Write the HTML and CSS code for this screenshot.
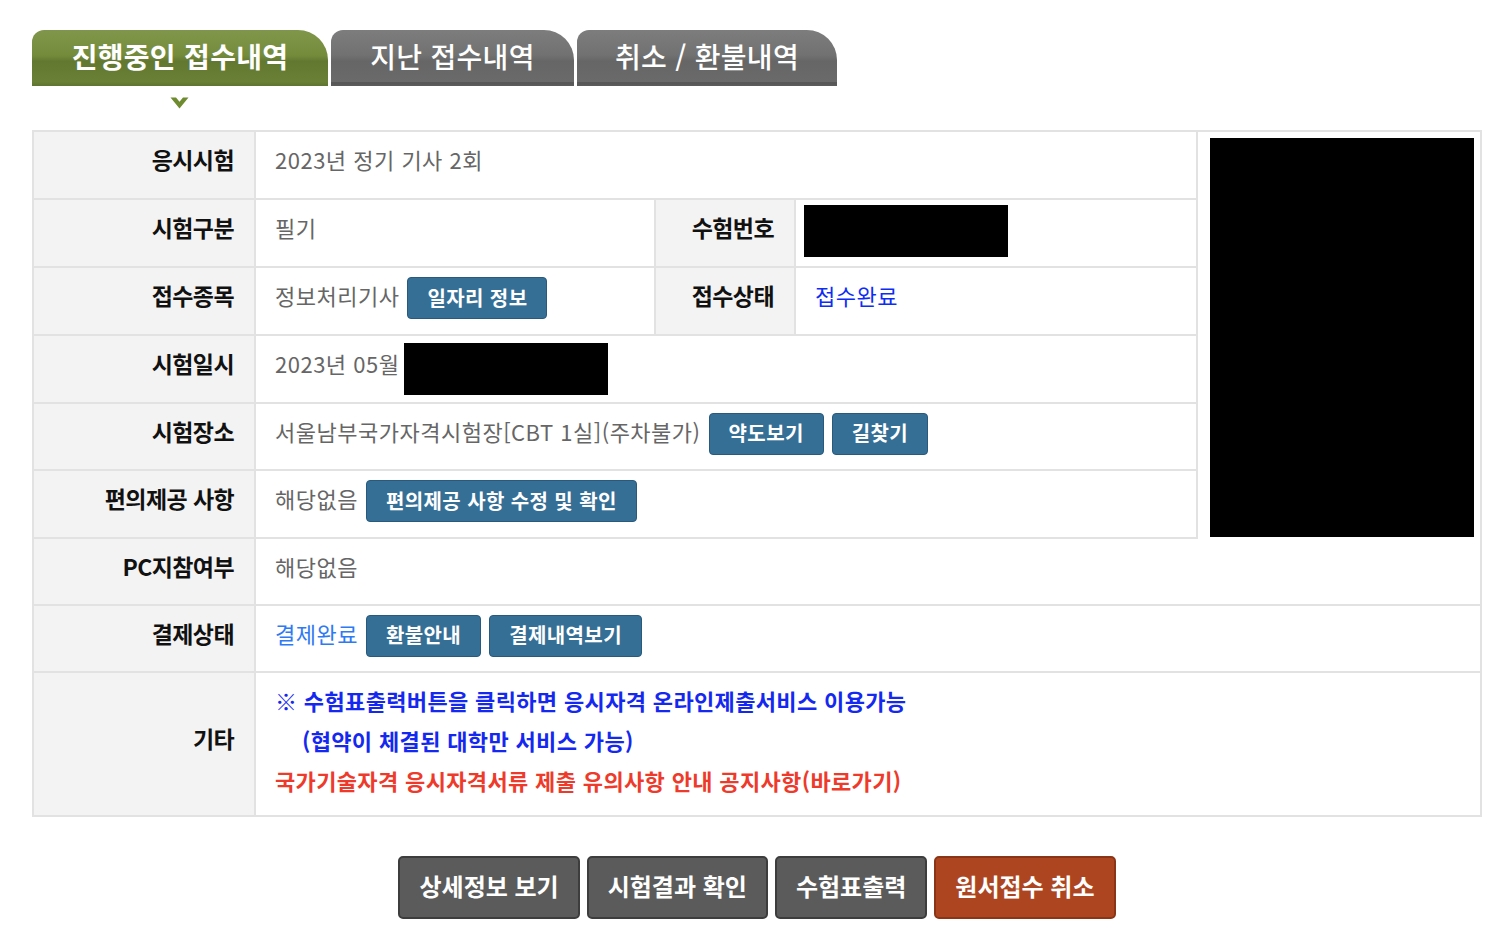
FILE: index.html
```html
<!DOCTYPE html>
<html lang="ko">
<head>
<meta charset="utf-8">
<title>접수내역</title>
<link rel="stylesheet" href="styles.css">
</head>
<body>
<div class="page">
  <div class="tabs">
    <div class="tab tab-active">진행중인 접수내역</div>
    <div class="tab tab-gray tab-w1">지난 접수내역</div>
    <div class="tab tab-gray tab-w2">취소 / 환불내역</div>
  </div>
  <div class="chev">
    <svg width="19" height="12" viewBox="0 0 19 12"><path d="M0.5 0.5 H6 L9.5 4.8 L13 0.5 H18.5 L9.5 11.5 Z" fill="#6f8b2f"/></svg>
  </div>

  <div class="info">
    <div class="lbl">응시시험</div>
    <div class="val span3">2023년 정기 기사 2회</div>
    <div class="photo"><div class="photo-box"></div></div>

    <div class="lbl">시험구분</div>
    <div class="val">필기</div>
    <div class="lbl">수험번호</div>
    <div class="val val-tight"><div class="redact"></div></div>

    <div class="lbl">접수종목</div>
    <div class="val">정보처리기사<span class="btn">일자리 정보</span></div>
    <div class="lbl">접수상태</div>
    <div class="val"><span class="link">접수완료</span></div>

    <div class="lbl">시험일시</div>
    <div class="val span3">2023년 05월<div class="redact redact-date"></div></div>

    <div class="lbl">시험장소</div>
    <div class="val span3">서울남부국가자격시험장[CBT 1실](주차불가)<span class="btn">약도보기</span><span class="btn">길찾기</span></div>

    <div class="lbl">편의제공 사항</div>
    <div class="val span3">해당없음<span class="btn">편의제공 사항 수정 및 확인</span></div>

    <div class="lbl">PC지참여부</div>
    <div class="val spanall">해당없음</div>

    <div class="lbl">결제상태</div>
    <div class="val spanall"><span class="link link-light">결제완료</span><span class="btn">환불안내</span><span class="btn">결제내역보기</span></div>

    <div class="lbl">기타</div>
    <div class="val spanall etc">
      <div class="etc-blue">※ 수험표출력버튼을 클릭하면 응시자격 온라인제출서비스 이용가능</div>
      <div class="etc-blue etc-indent">(협약이 체결된 대학만 서비스 가능)</div>
      <div class="etc-red">국가기술자격 응시자격서류 제출 유의사항 안내 공지사항(바로가기)</div>
    </div>
  </div>

  <div class="actions">
    <span class="act">상세정보 보기</span>
    <span class="act">시험결과 확인</span>
    <span class="act">수험표출력</span>
    <span class="act act-red">원서접수 취소</span>
  </div>
</div>
</body>
</html>
```
FILE: styles.css
```css
* { box-sizing: border-box; }
html, body { margin: 0; padding: 0; background: #fff; }
body {
  font-family: "Noto Sans CJK KR", "Noto Sans", sans-serif;
  color: #111;
}
.page {
  margin-left: 32px;
  padding-top: 30px;
  width: 1450px;
}
.tabs {
  display: flex;
  gap: 3px;
  height: 56px;
}
.tab {
  height: 56px;
  border-radius: 12px 30px 0 0;
  display: flex;
  align-items: center;
  justify-content: center;
  color: #fff;
  font-size: 28px;
  letter-spacing: 0.3px;
  padding-bottom: 5px;
}
.tab-active {
  width: 296px;
  font-weight: 700;
  background: linear-gradient(#80964a 0%, #758b3c 45%, #627830 56%, #6a8035 92%, #5f7430 100%);
}
.tab-gray {
  font-weight: 500;
  background: linear-gradient(#7d7d7d 0%, #717171 45%, #666 56%, #6a6a6a 92%, #555 94%, #5c5c5c 100%);
}
.tab-w1 { width: 243px; }
.tab-w2 { width: 260px; }
.chev {
  width: 296px;
  height: 44px;
  display: flex;
  justify-content: center;
  padding-top: 11px;
  padding-right: 2px;
}
.info {
  display: grid;
  grid-template-columns: 222px 400px 140px 402px 1fr;
  grid-template-rows: 68px 68px 68px 68px 67px 68px 67px 67px 144px;
  border-top: 2px solid #e2e2e2;
  border-left: 2px solid #e2e2e2;
}
.lbl, .val {
  border-right: 2px solid #e2e2e2;
  border-bottom: 2px solid #e2e2e2;
  display: flex;
  align-items: center;
  padding-bottom: 12px;
}
.lbl {
  background: #f3f3f3;
  justify-content: flex-end;
  padding-right: 20px;
  font-size: 23px;
  font-weight: 700;
  letter-spacing: -0.6px;
  color: #111;
}
.val {
  padding-left: 19px;
  font-size: 22px;
  letter-spacing: 0.5px;
  color: #666;
  gap: 8px;
}
.span3 { grid-column: 2 / 5; }
.spanall { grid-column: 2 / 6; }
.val-tight { padding-left: 8px; padding-bottom: 0; align-items: flex-start; padding-top: 5px; }
.photo {
  grid-column: 5;
  grid-row: 1 / 7;
  border-right: 2px solid #e2e2e2;
  padding: 6px 5px 0 12px;
}
.photo-box {
  background: #000;
  height: 399px;
  width: 264px;
}
.redact {
  background: #000;
  width: 204px;
  height: 52px;
}
.redact-date { margin-top: 12px; margin-left: -3px; }
.link { color: #0d2df5; }
.link-light { color: #2e7af3; }
.btn {
  display: inline-flex;
  align-items: center;
  height: 42px;
  padding: 0 19px 2px;
  background: #356f96;
  border: 1px solid #275a7d;
  border-radius: 4px;
  color: #fff;
  font-size: 20px;
  font-weight: 700;
  letter-spacing: 0.4px;
  margin-top: 6px;
}
.etc {
  flex-direction: column;
  align-items: flex-start;
  justify-content: center;
  gap: 0;
  padding-bottom: 8px;
  font-size: 22px;
  font-weight: 700;
  letter-spacing: 0.35px;
  line-height: 40px;
}
.etc-blue { color: #1428f0; }
.etc-indent { padding-left: 27px; }
.etc-red { color: #ee3a2b; }
.actions {
  display: flex;
  justify-content: center;
  gap: 7px;
  margin-top: 39px;
}
.act {
  height: 63px;
  display: inline-flex;
  align-items: center;
  padding: 0 19px 5px;
  background: #5b5b5b;
  border: 2px solid #3d3d3d;
  border-radius: 5px;
  color: #fff;
  font-size: 24px;
  font-weight: 700;
  letter-spacing: 0;
}
.act-red {
  background: #ad4620;
  border-color: #8b3517;
}
```
